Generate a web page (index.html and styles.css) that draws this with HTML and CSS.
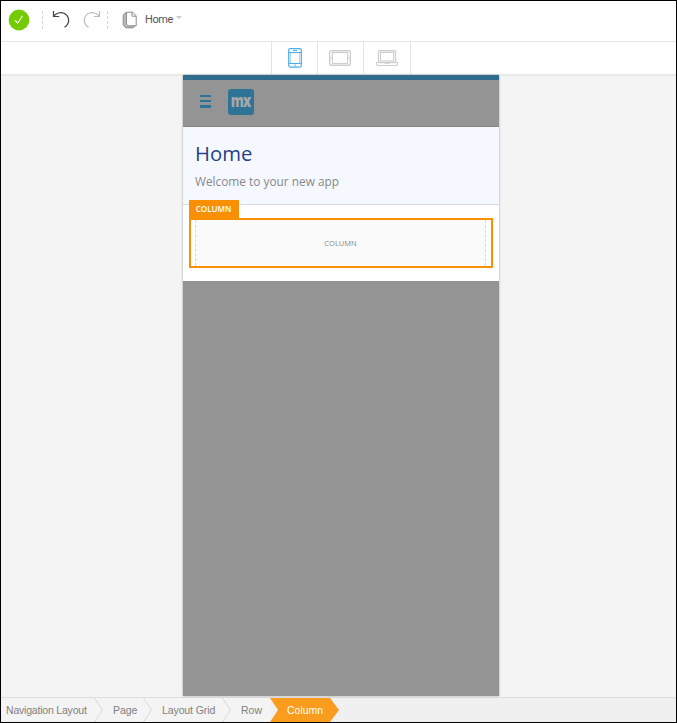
FILE: index.html
```html
<!DOCTYPE html>
<html lang="en">
<head>
<meta charset="utf-8">
<title>Page editor</title>
<link rel="stylesheet" href="styles.css">
</head>
<body>
<div class="editor">
  <header class="toolbar">
    <svg class="status" width="22" height="22" viewBox="0 0 22 22"><circle cx="11" cy="11" r="10.4" fill="#73cb04"/><path d="M7 11.200l2.700 3 4.800-7.400" fill="none" stroke="#fff" stroke-width="1.1"/></svg>
    <span class="divider divider-first"></span>
    <svg class="undo" width="19" height="19" viewBox="0 0 19 19" fill="none" stroke="#444" stroke-width="1.2"><path d="M1.500 1v5.500h5.700M1.700 6.200C4 3 8.500 1.800 12 3.200c4.700 1.900 6.500 8.300 2.200 12.800l-1.700 1.300"/></svg>
    <svg class="redo" width="19" height="19" viewBox="0 0 19 19" fill="none" stroke="#bcbcbc" stroke-width="1.2"><path d="M17.500 1v5.500h-5.700M17.300 6.200C15 3 10.500 1.800 7 3.200 2.300 5.100.5 11.500 4.800 16l1.700 1.300"/></svg>
    <span class="divider divider-second"></span>
    <svg class="pages" width="16" height="18" viewBox="0 0 16 18"><path d="M4 1.200L1.200 4v10l2.800 2.800h7l2-1.800" fill="#b9b9b9" stroke="#8b8b8b"/><path d="M4.500 1.200h6l3.700 3.600v10H6.200l-1.700-1.500z" fill="#fff" stroke="#8b8b8b"/><path d="M10 1.200v4h4.200" fill="none" stroke="#8b8b8b"/></svg>
    <span class="page-name">Home</span>
    <span class="caret"></span>
  </header>
  <nav class="devices">
    <span class="device"><svg width="14" height="20" viewBox="0 0 14 20" fill="none" stroke="#4cacec"><rect x=".7" y=".7" width="12.600" height="18.400" rx="1.500" stroke-width="1.200"/><path d="M1 4.500h12M1 15.500h12M5 2.500h4M7 16.300v2"/><path d="M2.500 5v10M11.500 5v10" stroke="#a9d7f6"/></svg></span>
    <span class="device device-tablet"><svg width="22" height="16" viewBox="0 0 22 16" fill="none" stroke="#cfcfcf"><rect x=".7" y=".7" width="20.600" height="14.600" rx="1.500" stroke-width="1.400"/><rect x="3.500" y="2.500" width="15" height="11" stroke-width="1.200"/><path d="M1 8h2M19 8h2"/></svg></span>
    <span class="device device-laptop"><svg width="22" height="17" viewBox="0 0 22 17" fill="none" stroke="#cfcfcf"><rect x="2.500" y=".7" width="17" height="11.800" rx="1" stroke-width="1.400"/><rect x="4.500" y="2.500" width="13" height="8.500"/><path stroke-width="1.200" d="M2.500 12.500h-2v1.500q0 1.500 1.500 1.500h18q1.500 0 1.500-1.500v-1.500h-2M8.500 12.500q2.500 2 5 0"/></svg></span>
  </nav>
  <main class="canvas">
    <div class="phone">
      <div class="app-bar">
        <span class="menu"><i></i><i></i><i></i></span>
        <span class="logo"><b>mx</b></span>
      </div>
      <section class="intro">
        <h1>Home</h1>
        <p>Welcome to your new app</p>
      </section>
      <section class="content">
        <div class="selection">
          <span class="tag">COLUMN</span>
          <div class="column">COLUMN</div>
        </div>
      </section>
    </div>
  </main>
  <footer class="crumbs">
    <span class="crumb c1">Navigation Layout</span>
    <svg class="chevron" width="9" height="24" viewBox="0 0 9 24"><path d="M.5 0l8 12-8 12"/></svg>
    <span class="crumb c2">Page</span>
    <svg class="chevron" width="9" height="24" viewBox="0 0 9 24"><path d="M.5 0l8 12-8 12"/></svg>
    <span class="crumb c3">Layout Grid</span>
    <svg class="chevron" width="9" height="24" viewBox="0 0 9 24"><path d="M.5 0l8 12-8 12"/></svg>
    <span class="crumb c4">Row</span>
    <span class="crumb current">Column</span>
  </footer>
</div>
</body>
</html>
```
FILE: styles.css
```css
* { box-sizing: border-box; }
body { margin: 0; font-family: "Liberation Sans", Arial, sans-serif; }
svg { display: block; flex: none; }
.editor { width: 677px; height: 723px; border: 1px solid #000; display: flex; flex-direction: column; background: #f4f4f4; overflow: hidden; }
.toolbar { height: 41px; flex: none; display: flex; align-items: flex-start; background: #fff; border-bottom: 1px solid #e7e7e7; }
.status { margin: 8px 0 0 7px; }
.divider { width: 0; height: 18px; margin-top: 10px; border-left: 1px dashed #d4d4d4; }
.divider-first { margin-left: 12px; }
.undo { margin: 9px 0 0 9px; }
.redo { margin: 9px 0 0 11px; }
.divider-second { margin-left: 6px; }
.pages { margin: 10px 0 0 14px; }
.page-name { margin: 12px 0 0 7px; width: 28px; font: 11px/14px Roboto, sans-serif; letter-spacing: -.4px; color: #555; }
.caret { margin: 15px 0 0 3px; border: 3px solid transparent; border-top-color: #c9c9c9; border-bottom: 0; }
.devices { height: 34px; flex: none; display: flex; padding-left: 270px; background: #fff; border-bottom: 2px solid #e9e9e9; }
.device { width: 46px; display: flex; align-items: center; justify-content: center; border-left: 1px solid #e4e4e4; }
.device-tablet svg, .device-laptop svg { margin-left: -1px; }
.device-laptop { width: 48px; border-right: 1px solid #e4e4e4; }
.canvas { height: 622px; flex: none; padding-left: 182px; border-bottom: 1px solid #dedede; }
.phone { width: 316px; height: 621px; margin-top: -1px; background: #949494; border-top: 5px solid #2f6d8d; box-shadow: 0 0 2px #999; }
.app-bar { height: 47px; display: flex; border-bottom: 1px solid #858585; }
.menu { display: flex; flex-direction: column; gap: 2px; width: 11px; margin: 15px 0 0 17px; }
.menu i { height: 2px; margin-bottom: 1px; background: #2f7396; }
.menu i:last-child { height: 3px; }
.logo { width: 26px; height: 26px; margin: 9px 0 0 17px; border-radius: 3px; background: #2f7396; color: #a3a7aa; font: 18px/23px "Open Sans", sans-serif; letter-spacing: -1px; display: flex; justify-content: center; }
.logo b { flex: none; font-weight: 800; transform: scaleX(.73); }
.intro { height: 78px; padding: 12px 12px 0; background: #f5f8fe; border-bottom: 1px solid #d9dde2; font-family: "Open Sans", sans-serif; }
.intro h1 { margin: 0; font-size: 20.300px; line-height: 28px; font-weight: 400; color: #264286; }
.intro p { margin: 5px 0 0; font-size: 11.850px; line-height: 18px; color: #888; }
.content { height: 76px; padding: 13px 6px; background: #fff; }
.selection { position: relative; height: 50px; border: 2px solid #f98f05; padding: 0 5px 0 4px; }
.tag { position: absolute; left: -2px; top: -20px; width: 50px; height: 19px; padding-right: 1px; background: #f98f05; color: #fff; font: 600 8.100px/18px "Open Sans", sans-serif; text-align: center; }
.column { height: 46px; background: #fafafa; border: dashed #d8d8d8; border-width: 0 1px; font: 7.500px/46px "Open Sans", sans-serif; color: #888; text-align: center; }
.crumbs { height: 24px; display: flex; background: #f0f0f0; color: #808080; font-size: 10.500px; line-height: 24px; }
.crumb { flex: none; white-space: nowrap; background: #f4f4f4; }
.c1 { width: 93px; padding-left: 5px; letter-spacing: -.2px; }
.c2 { width: 40px; padding-left: 10px; letter-spacing: -.1px; }
.c3 { width: 70px; padding-left: 10px; letter-spacing: -.1px; }
.c4 { width: 40px; padding-left: 10px; }
.chevron { width: 9px; background: #f4f4f4; fill: none; stroke: #d8d8d8; }
.current { width: 69px; padding-left: 17px; margin-left: -1px; background: #fa9c1e; color: #fff; clip-path: polygon(0 0, 60px 0, 100% 50%, 60px 100%, 0 100%, 8px 50%); }
```
